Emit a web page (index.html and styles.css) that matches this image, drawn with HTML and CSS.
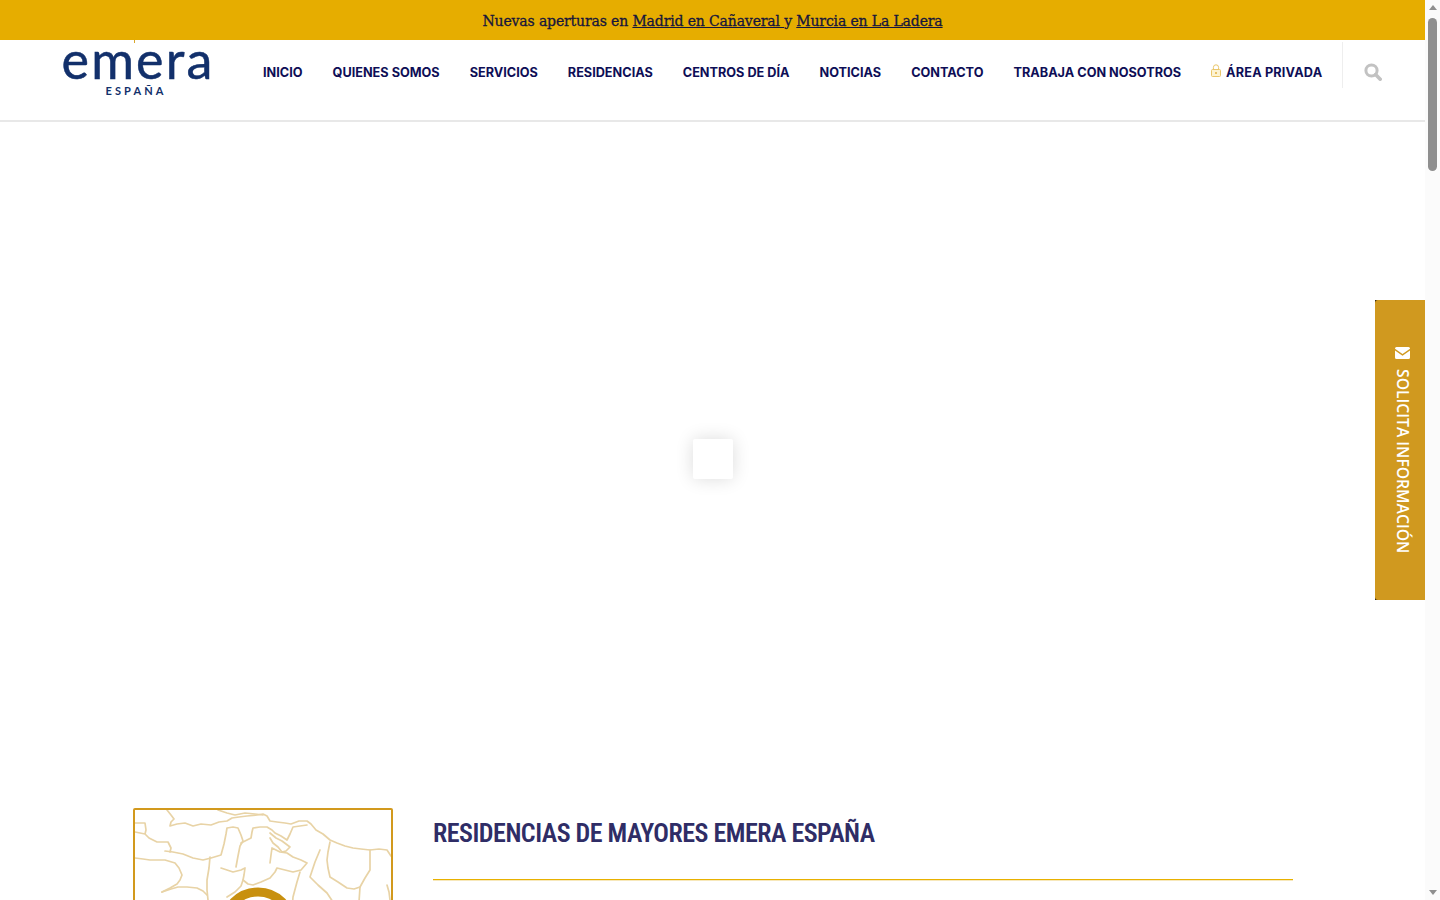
FILE: index.html
```html
<!DOCTYPE html>
<html lang="es">
<head>
<meta charset="utf-8">
<title>Emera España</title>
<link rel="stylesheet" href="styles.css">
</head>
<body>
<div class="page">
  <div class="notice">Nuevas aperturas en <a href="#">Madrid en Cañaveral </a>y <a href="#">Murcia en La Ladera</a></div>
  <header class="header">
    <a class="logo" href="#">
      <span class="logo-word">emera</span>
      <span class="logo-sub">ESPAÑA</span>
    </a>
    <nav class="nav">
      <a href="#">INICIO</a>
      <a href="#">QUIENES SOMOS</a>
      <a href="#">SERVICIOS</a>
      <a href="#">RESIDENCIAS</a>
      <a href="#">CENTROS DE DÍA</a>
      <a href="#">NOTICIAS</a>
      <a href="#">CONTACTO</a>
      <a href="#">TRABAJA CON NOSOTROS</a>
      <a href="#" class="private">
        <svg class="lock" viewBox="0 0 10 13" width="10" height="13"><path d="M2.400 6V3.400a2.600 2.600 0 0 1 5.200 0V6" fill="none" stroke="#e9c66a" stroke-width="1"/><rect x=".5" y="5.500" width="9" height="7" rx="1" fill="#fdf3d2" stroke="#e9c66a"/><circle cx="5" cy="9" r="1" fill="#e0b040"/></svg>
        ÁREA PRIVADA
      </a>
    </nav>
    <button class="search" aria-label="Buscar">
      <svg viewBox="0 0 18 18" width="18" height="18"><circle cx="7.500" cy="7.500" r="5.600" fill="none" stroke="#c2c2c2" stroke-width="3"/><path d="M11.600 11.600l4.600 4.600" stroke="#c2c2c2" stroke-width="3.600" stroke-linecap="round"/></svg>
    </button>
  </header>

  <section class="hero"><div class="loader"></div></section>

  <section class="intro">
    <div class="map">
      <svg viewBox="0 0 256 256" width="256" height="256" fill="none" stroke="#e8d3a6" stroke-width="1.700" stroke-linejoin="round" stroke-linecap="round">
        <path d="M0 13L10 13L11 20L10 24L0 22M10 24L14 28L22 32L33 32L36 38L35 42"/>
        <path d="M32 0L36 5L39 9L36 12L35 16L42 14L50 13L58 16L66 14L76 15L84 12L92 11L97 8L104 7L112 6L122 5L128 4L132 6L135 11L142 12L150 13L156 14L164 11L172 11L176 14L181 20L188 24L195 30L202 33L210 36L218 38L226 39L235 40L244 39L252 40L256 46"/>
        <path d="M83 0L92 3L100 5L110 3L120 4L128 5"/>
        <path d="M30 41L38 42L48 44L58 48L68 50L76 48L86 45L89 34L91 24L92 18L98 17L103 18L106 25L108 31L105 36L103 46L101 57"/>
        <path d="M0 48L8 49L15 50L24 50L30 50L40 53L44 58L47 65L45 70L42 74L35 78L27 82"/>
        <path d="M73 90L72 80L72 70L74 58L75 47"/>
        <path d="M86 58L92 60L98 62L106 60L110 58L109 65L108 70L113 74L118 75L126 72L135 68L140 62L142 58L150 60L158 62L166 60L172 53L166 50L158 47L152 43L145 42L137 38L136 45L135 53"/>
        <path d="M106 33L112 30L116 28L117 22L118 18L125 17L132 17L137 20L140 23L146 26L152 30L155 24L158 17L165 16L172 15"/>
        <path d="M135 23L141 28L147 31L155 37L151 41L147 42L143 37L138 33L135 28"/>
        <path d="M195 32L193 42L192 50L193 58L195 67L203 72L212 78L219 79L225 77L230 68L235 60L235 50L235 40"/>
        <path d="M165 62L162 72L158 87L157 100L157 110"/>
        <path d="M185 40L180 52L175 67L183 75L192 83L198 92L202 100"/>
        <path d="M225 77L224 92L223 110M252 75L254 82L255 90"/>
        <path d="M27 82L36 79L43 77L52 77L62 78L68 81L72 85"/>
        <path d="M108 70L106 76L100 82L92 87"/>
      </svg>
      <svg class="ring" viewBox="0 0 100 100" width="100" height="100"><circle cx="50" cy="50" r="34" fill="#fff" stroke="#c8900f" stroke-width="9"/></svg>
    </div>
    <div class="intro-text">
      <h1>RESIDENCIAS DE MAYORES EMERA ESPAÑA</h1>
      <div class="rule"></div>
    </div>
  </section>
</div>

<a class="tab" href="#">
  <span class="tab-inner">
    <svg viewBox="0 0 15 12" width="15" height="12"><path d="M0 1.500A1.500 1.500 0 0 1 1.500 0h12A1.500 1.500 0 0 1 15 1.500v.3L7.500 7 0 1.800zM0 3.500l7.500 5.200L15 3.500v7A1.500 1.500 0 0 1 13.500 12h-12A1.500 1.500 0 0 1 0 10.500z" fill="#fff"/></svg>
    <span class="tab-label">SOLICITA INFORMACIÓN</span>
  </span>
</a>

<div class="scrollbar" aria-hidden="true">
  <span class="arrow-up"></span>
  <span class="thumb-track"><span class="thumb"></span></span>
  <span class="arrow-down"></span>
</div>
</body>
</html>
```
FILE: styles.css
```css
* { box-sizing: border-box; }
html, body { margin: 0; padding: 0; background: #fff; }
body { font-family: "Open Sans", sans-serif; color: #222; }
a { color: inherit; text-decoration: none; }

.page { min-height: 5150px; margin-right: 15px; }

.notice {
  height: 40px;
  padding-top: 1px;
  background: #e6ad00;
  color: #16163c;
  font-family: "DejaVu Serif", serif;
  font-size: 14px;
  line-height: 40px;
  text-align: center;
  letter-spacing: -0.14px;
  -webkit-text-stroke: 0.3px #16163c;
}
.notice a { text-decoration: underline; }

.header {
  height: 82px;
  display: flex;
  align-items: flex-start;
  padding-left: 62px;
  background: #fff;
  border-bottom: 2px solid #e8e8e8;
}

.logo {
  position: relative;
  flex: none;
  width: 148px;
  display: flex;
  flex-direction: column;
  align-items: center;
  color: #12306b;
}
.logo::before {
  content: "";
  position: absolute;
  left: 72px;
  top: 0;
  width: 1px;
  height: 3px;
  background: #d9a62a;
}
.logo-word {
  font-family: "Lato", sans-serif;
  font-size: 52px;
  line-height: 34px;
  margin-top: 2px;
  margin-left: 4px;
  letter-spacing: 2.2px;
  -webkit-text-stroke: 0.5px #12306b;
}
.logo-sub {
  font-family: "Lato", sans-serif;
  font-size: 11px;
  font-weight: 700;
  letter-spacing: 3.1px;
  line-height: 14px;
  margin-top: 8px;
}

.nav {
  display: flex;
  gap: 30px;
  margin-left: 53px;
  height: 48px;
  align-items: center;
  margin-top: 8px;
  color: #0e0e56;
  font-family: "Inter", sans-serif;
  font-size: 12.7px;
  font-weight: 700;
  white-space: nowrap;
}
.private { display: flex; align-items: center; gap: 5px; letter-spacing: 0.17px; }
.lock { margin-top: -3px; }

.search {
  margin-left: 20px;
  margin-top: 2px;
  width: 60px;
  height: 46px;
  display: flex;
  align-items: center;
  justify-content: center;
  padding: 14px 0 0;
  border: 0;
  border-left: 1px solid #eee;
  background: none;
}

.hero {
  height: 646px;
  display: flex;
  align-items: center;
  justify-content: center;
}
.loader {
  width: 40px;
  height: 40px;
  background: #fff;
  border-radius: 2px;
  box-shadow: 0 0 18px rgba(0, 0, 0, .14);
  margin-top: 28px;
}

.intro {
  margin: 40px 0 0 133px;
  width: 1160px;
  display: flex;
  gap: 40px;
}
.map {
  position: relative;
  flex: none;
  width: 260px;
  height: 260px;
  border: 2px solid #d2991d;
  border-radius: 2px;
  overflow: hidden;
  background: #fff;
}
.map > svg { display: block; }
.map > .ring { position: absolute; left: 73px; top: 66px; }
.intro-text { flex: 1; }
h1 {
  margin: 0;
  color: #2f2d66;
  font-family: "Roboto", sans-serif;
  font-stretch: condensed;
  font-size: 26px;
  font-weight: 600;
  letter-spacing: -0.5px;
  line-height: 50px;
}
.rule {
  margin-top: 21px;
  height: 1px;
  background: #e8b100;
  box-shadow: 0 1px 0 rgba(232, 190, 60, .35);
}

.tab {
  position: fixed;
  right: 15px;
  top: 300px;
  width: 50px;
  height: 300px;
  background: #2a2214;
}
.tab-inner {
  display: flex;
  flex-direction: column;
  align-items: center;
  justify-content: center;
  gap: 10px;
  width: 100%;
  height: 100%;
  padding-left: 5px;
  background: #d0991f;
  border-radius: 3px 0 0 3px;
  color: #fff;
}
.tab-label {
  writing-mode: vertical-rl;
  font-family: "Open Sans", sans-serif;
  font-size: 15.7px;
  font-weight: 600;
  line-height: 20px;
  white-space: nowrap;
}

.scrollbar {
  position: fixed;
  top: 0;
  right: 0;
  bottom: 0;
  width: 15px;
  display: flex;
  flex-direction: column;
  align-items: center;
  background: #fbfbfb;
}
.arrow-up, .arrow-down {
  flex: none;
  width: 0;
  height: 0;
  border-left: 4.5px solid transparent;
  border-right: 4.5px solid transparent;
}
.arrow-up { margin-top: 5px; border-bottom: 5px solid #8f8f8f; }
.arrow-down { margin-bottom: 5px; border-top: 5px solid #8f8f8f; }
.thumb-track { flex: 1; width: 100%; padding: 8px 3px 0; }
.thumb {
  display: block;
  width: 9px;
  height: 153px;
  border-radius: 5px;
  background: #8f8f8f;
}
```
